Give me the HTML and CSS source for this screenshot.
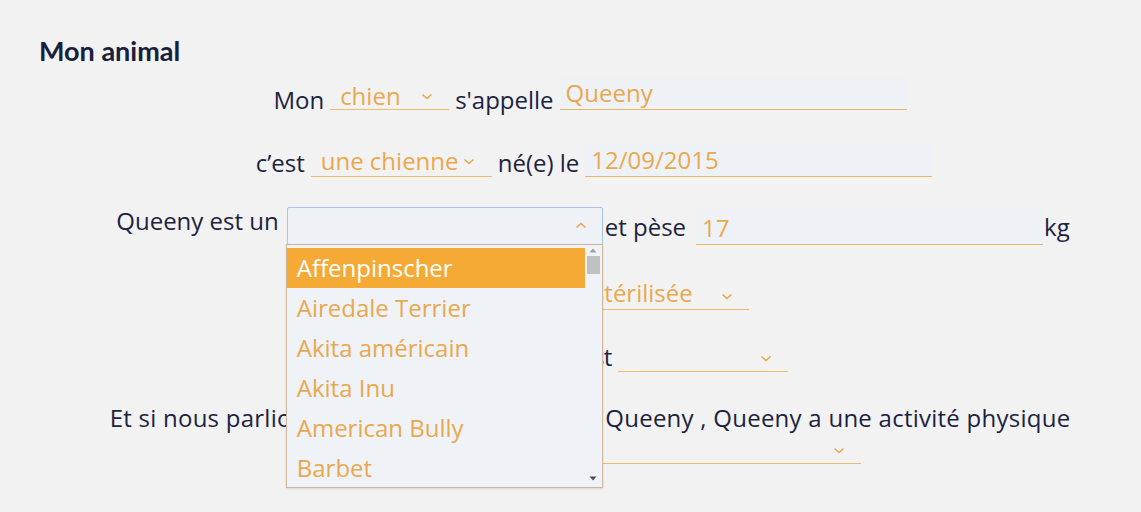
FILE: index.html
```html
<!DOCTYPE html>
<html lang="fr">
<head>
    <meta charset="UTF-8">
    <title>Mon animal</title>
    <link rel="stylesheet" href="styles.css">
</head>
<body>
    <div class="page">
        <h2 class="title">Mon animal</h2>

        <div class="form">
            <div class="row r1">
                <span class="lbl">Mon</span>
                <span class="pick w-chien">chien
                    <svg class="chev" viewBox="0 0 12 7"><path d="M1.5 1.5l4.5 4 4.5-4"/></svg>
                </span>
                <span class="lbl">s'appelle</span>
                <span class="field">Queeny</span>
            </div>

            <div class="row r2">
                <span class="lbl">c’est</span>
                <span class="pick w-sexe">une chienne
                    <svg class="chev" viewBox="0 0 12 7"><path d="M1.5 1.5l4.5 4 4.5-4"/></svg>
                </span>
                <span class="lbl">né(e) le</span>
                <span class="field">12/09/2015</span>
            </div>

            <div class="row r3">
                <span class="lbl raise">Queeny est un</span>
                <!-- liste des races ouverte -->
                <span class="pick open">
                    <svg class="chev" viewBox="0 0 12 7"><path d="M1.5 5.5l4.5-4 4.5 4"/></svg>
                    <span class="listbox">
                        <span class="opts">
                            <span class="opt selected">Affenpinscher</span>
                            <span class="opt">Airedale Terrier</span>
                            <span class="opt">Akita américain</span>
                            <span class="opt">Akita Inu</span>
                            <span class="opt">American Bully</span>
                            <span class="opt">Barbet</span>
                        </span>
                        <span class="sb">
                            <svg class="sb-arrow" viewBox="0 0 8 5"><path d="M4 0.5L7.5 4.5H0.5z"/></svg>
                            <span class="sb-thumb"></span>
                            <span class="sb-track"></span>
                            <svg class="sb-arrow" viewBox="0 0 8 5"><path d="M0.5 0.5H7.5L4 4.5z"/></svg>
                        </span>
                    </span>
                </span>
                <span class="lbl lift poids">et pèse</span>
                <span class="field">17</span>
                <span class="lbl lift unit">kg</span>
            </div>

            <div class="row r4">
                <span class="lbl">Queeny est</span>
                <span class="pick w-steril">stérilisée
                    <svg class="chev" viewBox="0 0 12 7"><path d="M1.5 1.5l4.5 4 4.5-4"/></svg>
                </span>
            </div>

            <div class="row r5">
                <span class="lbl narrow">Son alimentation est</span>
                <span class="pick w-alim">
                    <svg class="chev" viewBox="0 0 12 7"><path d="M1.5 1.5l4.5 4 4.5-4"/></svg>
                </span>
            </div>

            <div class="row r6">
                <span class="lbl wide">Et si nous parlions un peu plus de santé de Queeny , Queeny a une activité physique</span>
            </div>
            <div class="row r7">
                <span class="pick w-activite">
                    <svg class="chev" viewBox="0 0 12 7"><path d="M1.5 1.5l4.5 4 4.5-4"/></svg>
                </span>
            </div>
        </div>
    </div>
</body>
</html>
```

FILE: styles.css
```css
* {
    box-sizing: border-box;
}

html, body {
    min-height: 100%;
}

body {
    margin: 0;
    min-height: 512px;
    background-color: #f2f2f2;
    font-family: "Open Sans", "Noto Sans", sans-serif;
    color: #1c2340;
}

.page {
    padding: 35px 0 60px 39px;
}

.title {
    margin: 0;
    font-family: Lato, "Open Sans", sans-serif;
    font-weight: 700;
    font-size: 27px;
    line-height: 32px;
    color: #17203c;
}

.form {
    display: flex;
    flex-direction: column;
    margin-top: 11px;
}

.row {
    display: flex;
    justify-content: center;
    align-items: flex-end;
    gap: 6px;
}

/* espacement vertical des lignes */
.r2 { margin-top: 33px; padding-left: 8px; }
.r3 { margin-top: 30px; padding-left: 6px; }
.r4 { margin-top: 33px; }
.r5 { margin-top: 30px; }
.r6 { margin-top: 34px; }
.r7 { margin-top: 2px; }

.lbl {
    font-size: 24px;
    line-height: 24px;
    white-space: nowrap;
}

.r1 .lbl {
    margin-bottom: -2px;
}

.r2 .lbl {
    margin-bottom: 2px;
}

.r5 .lbl {
    margin-bottom: 3px;
}

.lbl.raise {
    margin-right: 2px;
    margin-bottom: 12px;
}

.lbl.lift {
    margin-bottom: 6px;
}

.lbl.poids {
    margin-left: -4px;
    margin-right: 4px;
}

.lbl.unit {
    margin-left: -5px;
}

.lbl.narrow {
    letter-spacing: -0.5px;
}

.lbl.wide {
    letter-spacing: 0.25px;
}

/* champs "select" soulignés */
.pick {
    position: relative;
    display: flex;
    align-items: flex-end;
    height: 32px;
    padding: 0 0 1px 10px;
    border-bottom: 1px solid #edbb6c;
    color: #eaa84e;
    font-size: 24px;
    line-height: 24px;
    white-space: nowrap;
}

.chev {
    position: absolute;
    right: 16px;
    top: 15px;
    width: 12px;
    height: 7px;
    fill: none;
    stroke: #eaa84e;
    stroke-width: 1.6;
}

.w-chien { width: 119px; }
.w-sexe { width: 181px; }
.w-steril { width: 185px; padding-left: 29px; }
.w-alim { width: 170px; }
.w-activite { width: 542px; }

.w-sexe .chev {
    right: 17px;
    top: 15px;
}

.r2 .pick,
.r2 .field {
    height: 34px;
}

.r2 .pick {
    padding-bottom: 3px;
}

.r4 .pick {
    padding-bottom: 4px;
}

/* champ texte */
.field {
    display: flex;
    align-items: flex-end;
    width: 347px;
    height: 32px;
    padding: 0 6px 4px;
    background-color: #eef2f6;
    border-bottom: 1px solid #e8b664;
    color: #eaa84e;
    font-size: 24px;
    line-height: 24px;
}

.r3 .field {
    height: 36px;
}

/* liste ouverte */
.pick.open {
    width: 316px;
    height: 38px;
    padding: 0;
    border: 1px solid #a9c3e6;
    border-radius: 2px;
    background-color: #eef2f6;
}

.pick.open .chev {
    right: 15px;
    top: 14px;
}

.listbox {
    position: absolute;
    top: 36px;
    left: -2px;
    z-index: 2;
    display: flex;
    width: 317px;
    height: 244px;
    border: 1px solid #cdb89d;
    background-color: #eff3f7;
    box-shadow: 0 1px 2px rgba(0, 0, 0, 0.12);
    overflow: hidden;
}

.opts {
    display: flex;
    flex-direction: column;
    flex: 1;
    padding-top: 3px;
}

.opt {
    flex: none;
    height: 40px;
    padding-left: 10px;
    line-height: 40px;
    color: #eaa84e;
}

.opt.selected {
    background-color: #f4aa35;
    color: #fff;
}

.sb {
    display: flex;
    flex-direction: column;
    align-items: center;
    width: 17px;
    padding: 1px 0 4px;
}

.sb-arrow {
    flex: none;
    width: 8px;
    height: 5px;
    margin: 2px 0;
    fill: #a0a0a0;
}

.sb-arrow:last-child {
    fill: #505050;
}

.sb-thumb {
    flex: none;
    width: 13px;
    height: 18px;
    margin-top: 1px;
    background-color: #c1c1c1;
}

.sb-track {
    flex: 1;
}
```
